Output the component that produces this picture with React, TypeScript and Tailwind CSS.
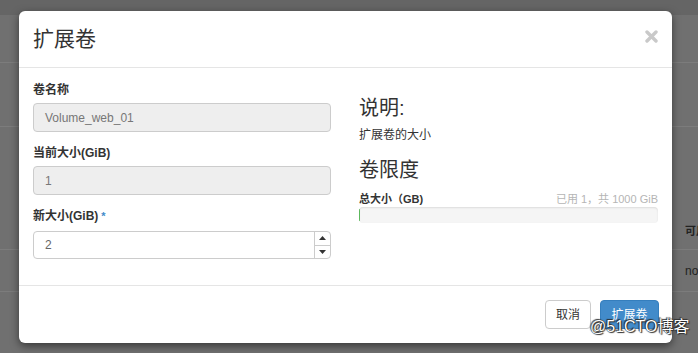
import React from 'react'

const font = '"Liberation Sans", "Noto Sans CJK SC", sans-serif'

function Label({ children, star }: { children: React.ReactNode; star?: boolean }) {
  return (
    <div className="h-[17px] text-[12px] font-bold leading-[17px] text-[#333]">
      {children}
      {star && <span className="ml-[3px] align-top text-[11px] text-[#428bca]">*</span>}
    </div>
  )
}

export default function App() {
  return (
    <div className="relative h-[353px] w-[698px] overflow-hidden bg-[#707070]" style={{ fontFamily: font }}>
      {/* page behind the backdrop */}
      <div className="flex flex-col">
        <div className="h-[15px] bg-[#656565]" />
        <div className="h-[48px] border-b border-[#7c7c7c]" />
        <div className="h-[64px] border-b border-[#7c7c7c]" />
        <div className="flex h-[123px] items-end justify-end border-b border-[#7c7c7c]">
          <span className="mb-[10px] w-[13px] overflow-hidden whitespace-nowrap text-[11px] font-bold text-[#222]">可用</span>
        </div>
        <div className="flex h-[42px] items-center justify-end border-b border-[#7c7c7c]">
          <span className="w-[13px] overflow-hidden whitespace-nowrap text-[12px] text-[#222]">now</span>
        </div>
      </div>

      {/* modal */}
      <div className="absolute left-[19px] top-[11px] flex h-[332px] w-[653px] flex-col rounded-[6px] bg-white shadow-[0_3px_9px_rgba(0,0,0,0.5)]">
        <div className="flex h-[57px] items-center justify-between border-b border-[#e5e5e5] pl-[14px] pr-[14px]">
          <h4 className="text-[21px] font-normal text-[#333]">扩展卷</h4>
          <svg width="13" height="13" viewBox="0 0 13 13" className="mb-[6px]">
            <path d="M2 2 L11 11 M11 2 L2 11" stroke="#c9c9c9" strokeWidth="3.4" strokeLinecap="round" />
          </svg>
        </div>

        <div className="flex flex-1 gap-[28px] border-b border-[#e5e5e5] px-[14px] pt-[14px]">
          <div className="w-[298px]">
            <Label>卷名称</Label>
            <div className="mt-[4px] flex h-[29px] items-center rounded-[4px] border border-[#ccc] bg-[#eeeeee] px-[11px] text-[12px] text-[#777]">
              Volume_web_01
            </div>
            <div className="mt-[13px]">
              <Label>当前大小(GiB)</Label>
            </div>
            <div className="mt-[4px] flex h-[29px] items-center rounded-[4px] border border-[#ccc] bg-[#eeeeee] px-[11px] text-[12px] text-[#777]">
              1
            </div>
            <div className="mt-[13px]">
              <Label star>新大小(GiB)</Label>
            </div>
            <div className="mt-[6px] flex h-[28px] rounded-[4px] border border-[#ccc] bg-white text-[12px] text-[#666]">
              <div className="flex flex-1 items-center px-[11px]">2</div>
              <div className="flex w-[16px] flex-col border-l border-[#ccc]">
                <div className="flex flex-1 items-center justify-center border-b border-[#ccc]">
                  <svg width="7" height="4" viewBox="0 0 7 4"><path d="M0 4 L3.5 0 L7 4 Z" fill="#333" /></svg>
                </div>
                <div className="flex flex-1 items-center justify-center">
                  <svg width="7" height="4" viewBox="0 0 7 4"><path d="M0 0 L3.5 4 L7 0 Z" fill="#333" /></svg>
                </div>
              </div>
            </div>
          </div>

          <div className="w-[299px] pt-[15px]">
            <h3 className="text-[20px] font-normal leading-[22px] text-[#333]">说明:</h3>
            <p className="mt-[8px] text-[12px] leading-[16px] text-[#333]">扩展卷的大小</p>
            <h3 className="mt-[16px] text-[20px] font-normal leading-[22px] text-[#333]">卷限度</h3>
            <div className="mt-[11px] flex h-[14px] items-center justify-between text-[11px] leading-[14px]">
              <span className="font-bold text-[#333]">总大小（GB)</span>
              <span className="text-[#b5b5b5]">已用 1，共 1000 GiB</span>
            </div>
            <div className="mt-[1px] flex h-[16px] items-center overflow-hidden rounded-[4px] bg-[#f5f5f5] shadow-[inset_0_1px_2px_rgba(0,0,0,0.1)]">
              <div className="h-[12px] w-[1px] bg-[#5cb85c]" />
            </div>
          </div>
        </div>

        <div className="flex h-[57px] items-center justify-end gap-[9px] px-[13px]">
          <button className="h-[29px] w-[46px] rounded-[4px] border border-[#ccc] bg-white text-[12px] text-[#333]">取消</button>
          <button className="h-[29px] w-[59px] rounded-[4px] border border-[#357ebd] bg-[#428bca] text-[12px] text-white">扩展卷</button>
        </div>
      </div>

      {/* watermark */}
      <div
        className="absolute left-[590px] top-[316px] whitespace-nowrap text-[16px] leading-[22px] text-white"
        style={{ textShadow: '0 0 1px #000, 1px 1px 1px #333, -1px -1px 1px #333' }}
      >
        @51CTO博客
      </div>
    </div>
  )
}
